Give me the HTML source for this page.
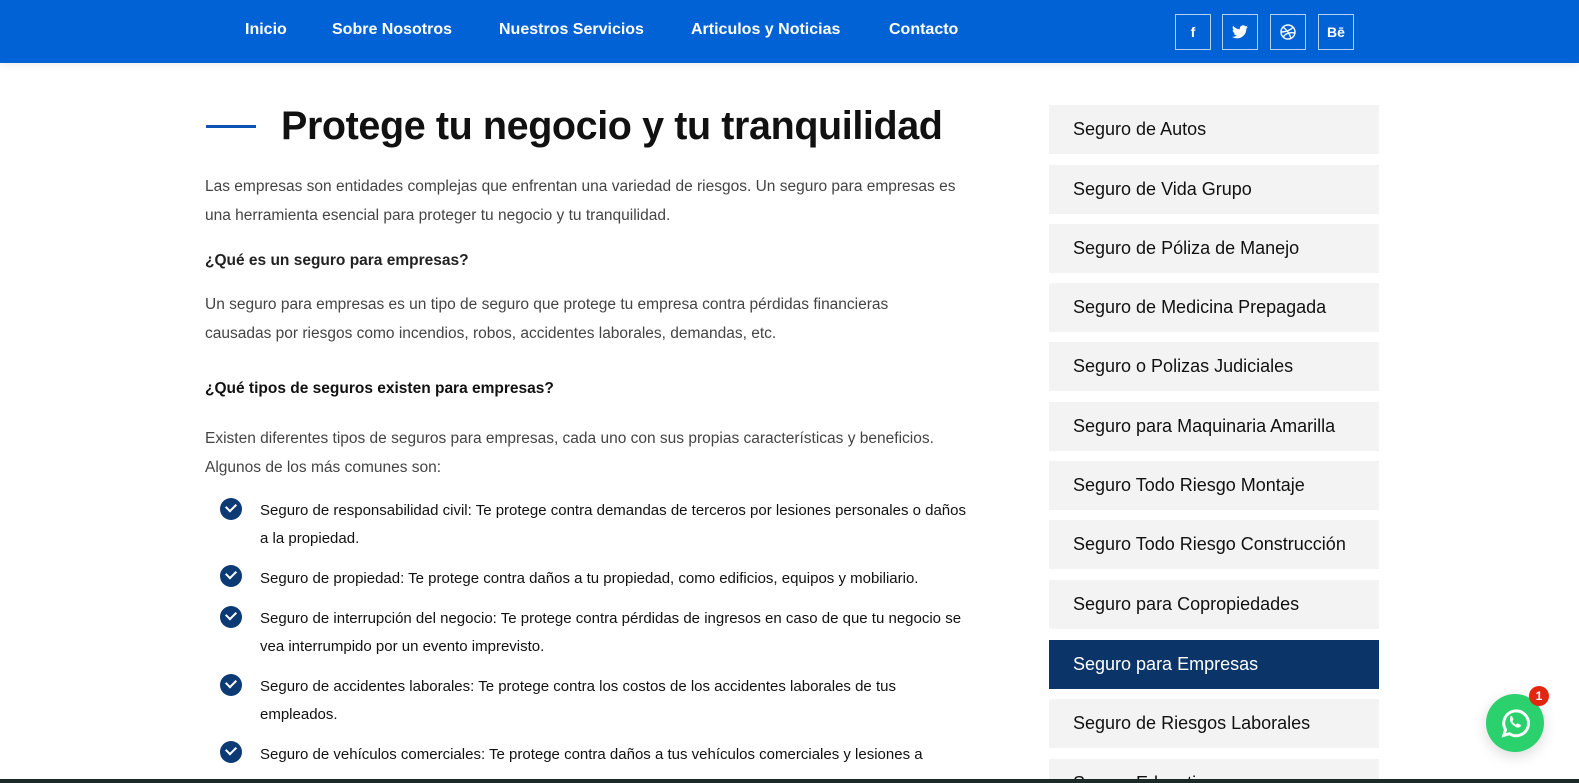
<!DOCTYPE html>
<html><head><meta charset="utf-8"><style>
*{margin:0;padding:0;box-sizing:border-box}
html,body{width:1579px;height:783px;overflow:hidden}
body{background:#fff;font-family:"Liberation Sans",Arial,sans-serif;position:relative}
.nav{position:absolute;left:0;top:0;width:1579px;height:63px;background:#0062d4;box-shadow:0 2px 8px rgba(0,0,0,.08)}
.nav a{position:absolute;top:21px;color:#fff;font-weight:bold;font-size:16px;text-decoration:none}
.soc{position:absolute;top:14px;width:36px;height:36px;border:1px solid rgba(255,255,255,.7);color:#fff;display:flex;align-items:center;justify-content:center;font-weight:bold;font-size:14px}
h1{position:absolute;left:281px;top:104px;font-size:39.5px;font-weight:bold;color:#111;letter-spacing:-0.4px}
.bar{position:absolute;left:206px;top:125px;width:50px;height:3px;background:#0d52b5}
.p{position:absolute;left:205px;width:765px;font-size:15.5px;line-height:29px;color:#444}
.b{position:absolute;left:205px;font-size:15.5px;font-weight:bold;color:#222}
.li{position:absolute;left:260px;width:720px;font-size:15px;line-height:28px;color:#111;white-space:nowrap}
.ck{position:absolute;left:220px;width:22px;height:22px;border-radius:50%;background:#0b3a75}
.ck::after{content:"";position:absolute;left:6px;top:5px;width:8px;height:5px;border-left:2.5px solid #fff;border-bottom:2.5px solid #fff;transform:rotate(-45deg)}
.side{position:absolute;left:1049px;width:330px;height:49px;background:#f3f3f3;font-size:18px;color:#111;padding-left:24px;line-height:49px}
.side.on{background:#0b3469;color:#fff}
</style></head><body>
<div class="nav">
<a style="left:245px">Inicio</a>
<a style="left:332px">Sobre Nosotros</a>
<a style="left:499px">Nuestros Servicios</a>
<a style="left:691px">Articulos y Noticias</a>
<a style="left:889px">Contacto</a>
<div class="soc" style="left:1175px">f</div>
<div class="soc" style="left:1222px"><svg width="16" height="14" viewBox="0 0 24 20"><path fill="#fff" d="M24 2.4a10 10 0 0 1-2.8.8A5 5 0 0 0 23.3.4a10 10 0 0 1-3.1 1.2A4.9 4.9 0 0 0 11.8 6 14 14 0 0 1 1.7.9a4.9 4.9 0 0 0 1.5 6.6 5 5 0 0 1-2.2-.6 4.9 4.9 0 0 0 3.9 4.9 5 5 0 0 1-2.2.1 4.9 4.9 0 0 0 4.6 3.4A9.9 9.9 0 0 1 0 17.3 14 14 0 0 0 7.5 19.5c9.1 0 14-7.5 14-14v-.6A10 10 0 0 0 24 2.4z"/></svg></div>
<div class="soc" style="left:1270px"><svg width="16" height="16" viewBox="0 0 16 16" fill="none" stroke="#fff" stroke-width="1.4"><circle cx="8" cy="8" r="7"/><path d="M3 3c4 3 7 7 8 12M1 8c5 0 10-2 12-5M3 13c3-4 7-5 12-4"/></svg></div>
<div class="soc" style="left:1318px">Bē</div>
</div>
<div class="bar"></div>
<h1>Protege tu negocio y tu tranquilidad</h1>
<div class="p" style="top:172px">Las empresas son entidades complejas que enfrentan una variedad de riesgos. Un seguro para empresas es una herramienta esencial para proteger tu negocio y tu tranquilidad.</div>
<div class="b" style="top:252px">¿Qué es un seguro para empresas?</div>
<div class="p" style="top:290px">Un seguro para empresas es un tipo de seguro que protege tu empresa contra pérdidas financieras<br>causadas por riesgos como incendios, robos, accidentes laborales, demandas, etc.</div>
<div class="b" style="top:380px;color:#111">¿Qué tipos de seguros existen para empresas?</div>
<div class="p" style="top:424px">Existen diferentes tipos de seguros para empresas, cada uno con sus propias características y beneficios.<br>Algunos de los más comunes son:</div>
<div class="ck" style="top:498px"></div><div class="li" style="top:497px">Seguro de responsabilidad civil: Te protege contra demandas de terceros por lesiones personales o daños<br>a la propiedad.</div>
<div class="ck" style="top:565px"></div><div class="li" style="top:565px">Seguro de propiedad: Te protege contra daños a tu propiedad, como edificios, equipos y mobiliario.</div>
<div class="ck" style="top:606px"></div><div class="li" style="top:605px">Seguro de interrupción del negocio: Te protege contra pérdidas de ingresos en caso de que tu negocio se<br>vea interrumpido por un evento imprevisto.</div>
<div class="ck" style="top:674px"></div><div class="li" style="top:673px">Seguro de accidentes laborales: Te protege contra los costos de los accidentes laborales de tus<br>empleados.</div>
<div class="ck" style="top:741px"></div><div class="li" style="top:741px">Seguro de vehículos comerciales: Te protege contra daños a tus vehículos comerciales y lesiones a</div>
<div class="side" style="top:105px">Seguro de Autos</div>
<div class="side" style="top:165px">Seguro de Vida Grupo</div>
<div class="side" style="top:224px">Seguro de Póliza de Manejo</div>
<div class="side" style="top:283px">Seguro de Medicina Prepagada</div>
<div class="side" style="top:342px">Seguro o Polizas Judiciales</div>
<div class="side" style="top:402px">Seguro para Maquinaria Amarilla</div>
<div class="side" style="top:461px">Seguro Todo Riesgo Montaje</div>
<div class="side" style="top:520px">Seguro Todo Riesgo Construcción</div>
<div class="side" style="top:580px">Seguro para Copropiedades</div>
<div class="side on" style="top:640px">Seguro para Empresas</div>
<div class="side" style="top:699px">Seguro de Riesgos Laborales</div>
<div class="side" style="top:759px;height:24px;overflow:hidden">Seguro Educativo</div>
<div style="position:absolute;left:0;top:779px;width:1579px;height:4px;background:#1b2a26"></div>
<div style="position:absolute;left:1486px;top:694px;width:58px;height:58px;border-radius:50%;background:#2bd16c;box-shadow:0 4px 14px rgba(0,0,0,.15);display:flex;align-items:center;justify-content:center">
<svg width="36" height="36" viewBox="0 0 32 32"><path fill="none" stroke="#fff" stroke-width="2.6" d="M6 27l1.6-5A11 11 0 1 1 11 25.5z"/><path fill="#fff" d="M12 10c.5-.5 1.2-.4 1.5.2l1 2.2c.2.5 0 .9-.4 1.3l-.5.5c.6 1.4 1.8 2.6 3.2 3.2l.6-.6c.4-.4.9-.5 1.3-.3l2.1 1c.6.3.7 1 .2 1.5-1.3 1.3-3 1.6-5.5-.2-2.4-1.7-3.9-4-4-5.6 0-1.4.3-2.5.5-3.2z"/></svg></div>
<div style="position:absolute;left:1529px;top:686px;width:20px;height:20px;border-radius:50%;background:#e3260f;color:#fff;font-size:12px;font-weight:bold;text-align:center;line-height:20px">1</div>
</body></html>
